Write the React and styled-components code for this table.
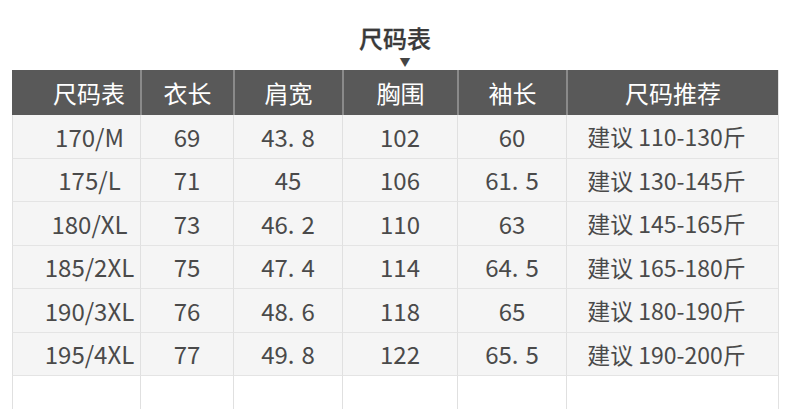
import React from 'react';
import styled, { createGlobalStyle } from 'styled-components';

const GlobalStyle = createGlobalStyle`
    html, body {
        margin: 0;
        padding: 0;
        background: #fff;
    }
    body {
        font-family: "Noto Sans CJK SC", "Noto Sans", sans-serif;
        color: #444;
    }
`

const Page = styled.div`
    width: 790px;
    height: 409px;
    overflow: hidden;
    padding: 0 12px;
    box-sizing: border-box;
`

const Heading = styled.div`
    display: flex;
    flex-direction: column;
    align-items: center;
    padding-top: 25px;
    height: 70px;
    box-sizing: border-box;

    .heading__title {
        font-size: 24px;
        line-height: 26px;
        font-weight: 500;
        color: #3a3a3a;
        -webkit-text-stroke: 0.3px #3a3a3a;
    }

    .heading__arrow {
        font-size: 11px;
        line-height: 14px;
        margin-top: 4px;
        color: #444;
        padding-left: 20px;
    }
`

const Table = styled.div`
    display: grid;
    grid-template-columns: 128px 93px 109px 115px 109px 212px;
    grid-auto-rows: 43.5px;
    grid-template-rows: 45px;
    width: 766px;
    border-right: 1px solid #e2e2e2;
`

const HeadCell = styled.div`
    display: flex;
    align-items: center;
    justify-content: center;
    background: #595959;
    color: #fff;
    font-size: 24px;
    padding-left: ${props => props.$indent || 0}px;
    border-left: ${props => props.$first ? 'none' : '2px solid #8a8a8a'};
`

const Cell = styled.div`
    display: flex;
    align-items: center;
    justify-content: center;
    background: ${props => props.$empty ? '#fff' : '#f5f5f5'};
    color: #4a4a4a;
    font-size: ${props => props.$size || 24}px;
    padding-left: ${props => props.$indent || 0}px;
    padding-right: ${props => props.$outdent || 0}px;
    border-left: 1px solid #e0e0e0;
    border-bottom: ${props => props.$empty ? 'none' : '1px solid #e4e4e4'};
    box-sizing: border-box;
`

const Dot = styled.span`
    margin-right: 7px;
`

const Value = ({ v }) => {
    if (!/^\d+\.\d+$/.test(v)) return v;
    const [a, b] = v.split('.');
    return <>{a}<Dot>.</Dot>{b}</>;
}

const headers = ['尺码表', '衣长', '肩宽', '胸围', '袖长', '尺码推荐'];

const rows = [
    ['170/M', '69', '43.8', '102', '60', '建议 110-130斤'],
    ['175/L', '71', '45', '106', '61.5', '建议 130-145斤'],
    ['180/XL', '73', '46.2', '110', '63', '建议 145-165斤'],
    ['185/2XL', '75', '47.4', '114', '64.5', '建议 165-180斤'],
    ['190/3XL', '76', '48.6', '118', '65', '建议 180-190斤'],
    ['195/4XL', '77', '49.8', '122', '65.5', '建议 190-200斤'],
];

const App = () => {
    return (
        <Page>
            <GlobalStyle />
            <Heading>
                <div className='heading__title'>尺码表</div>
                <div className='heading__arrow'>▼</div>
            </Heading>
            <Table>
                {headers.map((h, i) => (
                    <HeadCell key={h} $first={i === 0} $indent={i === 0 ? 26 : 0}>{h}</HeadCell>
                ))}
                {rows.map((row, r) => row.map((v, c) => (
                    <Cell
                        key={r + '-' + c}
                        $indent={c === 0 ? 26 : 0}
                        $outdent={c === 5 ? 12 : 0}
                        $size={c === 5 ? 23 : 24}
                    >
                        <Value v={v} />
                    </Cell>
                )))}
                {headers.map(h => <Cell key={'empty-' + h} $empty />)}
            </Table>
        </Page>
    )
}

export default App;
